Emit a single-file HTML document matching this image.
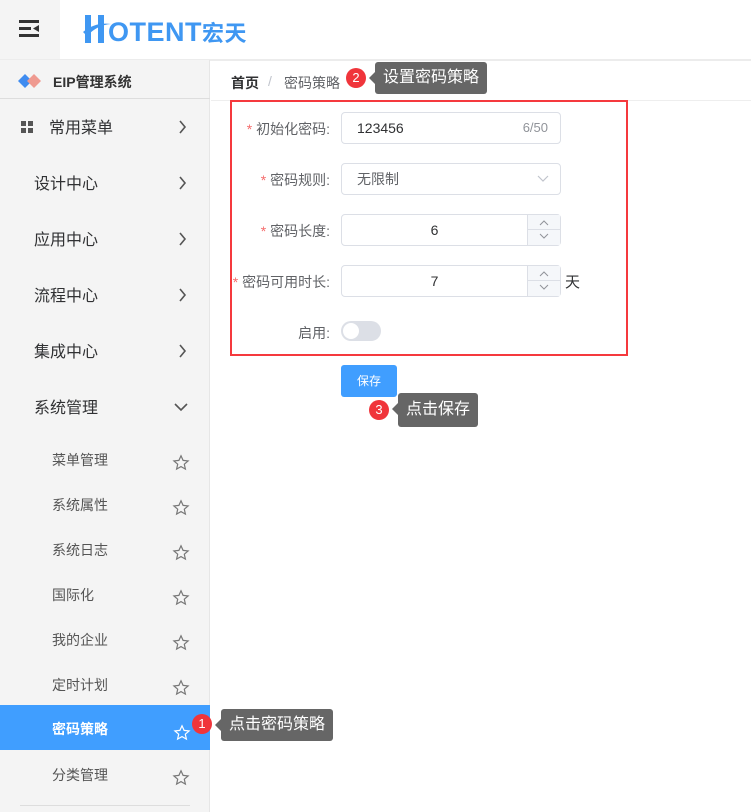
<!DOCTYPE html>
<html><head><meta charset="utf-8"><style>
*{margin:0;padding:0;box-sizing:border-box}
body{width:751px;height:812px;overflow:hidden;background:#fff;font-family:"Liberation Sans","Noto Sans CJK SC",sans-serif;position:relative;color:#303133}
.abs{position:absolute}
.side{left:0;top:60px;width:210px;height:752px;background:#f4f4f4;border-right:1px solid #e6e6e6}
.item{position:absolute;left:0;width:210px;font-size:16px;color:#303133}
.sub{position:absolute;left:0;width:210px;height:45px;line-height:45px;font-size:14px;color:#555;padding-left:52px}
.lbl{position:absolute;font-size:14px;color:#606266;text-align:right;width:100px;right:0}
.inp{position:absolute;left:341px;width:220px;height:32px;border:1px solid #dcdfe6;border-radius:4px;font-size:14px}
.tip{position:absolute;background:#666;color:#fff;font-size:16px;border-radius:3px;height:32px;line-height:32px;padding:0 8px}
.tip:before{content:"";position:absolute;left:-6px;top:10px;border:6px solid transparent;border-left:0;border-right-color:#666}
.badge{position:absolute;width:20px;height:20px;border-radius:50%;background:#f0353b;color:#fff;font-size:13px;text-align:center;line-height:20px}
.spin{position:absolute;right:0;top:0;width:33px;height:30px;background:#f5f7fa;border-left:1px solid #dcdfe6}
.spin div{height:15px;position:relative}
.spin svg{position:absolute;left:11px;top:5px}
</style></head><body>
<div class="abs" style="left:0;top:0;width:60px;height:60px;background:#f4f4f4"></div>
<svg class="abs" style="left:19px;top:20px" width="22" height="17"><rect x="0" y="0" width="20" height="3" fill="#333"/><rect x="0" y="7" width="12" height="3" fill="#333"/><rect x="0" y="14" width="20" height="3" fill="#333"/><path d="M20 5 L14 8.5 L20 12Z" fill="#333"/></svg>
<svg class="abs" style="left:83px;top:12px" width="28" height="33"><path d="M2 3h6v28h-6Z M15 3h6v28h-6Z" fill="#3f97f2"/><path d="M0 20 Q12 10 28 12 Q14 13 4 24Z" fill="#3f97f2"/></svg>
<div class="abs" style="left:108px;top:16px;font-size:27px;font-weight:bold;color:#3f97f2;letter-spacing:0.5px">OTENT<span style="font-size:22px">宏天</span></div>
<div class="abs" style="left:0;top:59px;width:751px;height:2px;background:#ececec"></div>
<div class="abs side"></div>
<svg class="abs" style="left:18px;top:73px" width="24" height="16"><path d="M0 8L7 1L14 8L7 15Z" fill="#3f8cf0"/><path d="M9 8L16 1L23 8L16 15Z" fill="#ef9a90"/></svg>
<div class="abs" style="left:53px;top:72px;font-size:14px;font-weight:bold;color:#333">EIP管理系统</div>
<div class="abs" style="left:0;top:98px;width:210px;height:1px;background:#ddd"></div>
<svg class="abs" style="left:21px;top:121px" width="12" height="12"><rect width="5" height="5" fill="#555"/><rect x="7" width="5" height="5" fill="#555"/><rect y="7" width="5" height="5" fill="#555"/><rect x="7" y="7" width="5" height="5" fill="#555"/></svg>
<div class="item" style="top:114px;left:49px">常用菜单</div>
<div class="item" style="top:170px;left:34px">设计中心</div>
<div class="item" style="top:226px;left:34px">应用中心</div>
<div class="item" style="top:282px;left:34px">流程中心</div>
<div class="item" style="top:338px;left:34px">集成中心</div>
<div class="item" style="top:394px;left:34px">系统管理</div>
<svg class="abs" style="left:0;top:0" width="210" height="812"><g fill="none" stroke="#555" stroke-width="1.6"><path d="M180 121l5 6-5 6"/><path d="M180 177l5 6-5 6"/><path d="M180 233l5 6-5 6"/><path d="M180 289l5 6-5 6"/><path d="M180 345l5 6-5 6"/><path d="M175 404l6 6 6-6"/></g></svg>
<div class="abs" style="left:0;top:705px;width:210px;height:45px;background:#409eff"></div>
<div class="sub" style="top:438px">菜单管理</div>
<div class="sub" style="top:483px">系统属性</div>
<div class="sub" style="top:528px">系统日志</div>
<div class="sub" style="top:573px">国际化</div>
<div class="sub" style="top:618px">我的企业</div>
<div class="sub" style="top:663px">定时计划</div>
<div class="sub" style="top:707px;color:#fff;font-weight:bold">密码策略</div>
<div class="sub" style="top:753px">分类管理</div>
<svg class="abs" style="left:0;top:0" width="210" height="812"><defs><path id="st" d="M8 0.8L10.1 5.4 15.1 5.9 11.3 9.2 12.4 14.1 8 11.6 3.6 14.1 4.7 9.2 0.9 5.9 5.9 5.4Z" fill="none" stroke-width="1.2"/></defs>
<g stroke="#777"><use href="#st" x="173" y="455"/><use href="#st" x="173" y="500"/><use href="#st" x="173" y="545"/><use href="#st" x="173" y="590"/><use href="#st" x="173" y="635"/><use href="#st" x="173" y="680"/><use href="#st" x="173" y="770"/></g><g stroke="#fff"><use href="#st" x="174" y="725"/></g>
<rect x="20" y="805" width="170" height="1" fill="#ddd"/></svg>
<div class="badge" style="left:192px;top:714px">1</div>
<div class="tip" style="left:221px;top:709px">点击密码策略</div>
<div class="abs" style="left:231px;top:73px;font-size:14px;font-weight:bold;color:#303133">首页</div>
<div class="abs" style="left:268px;top:73px;font-size:14px;color:#c0c4cc">/</div>
<div class="abs" style="left:284px;top:73px;font-size:14px;color:#606266">密码策略</div>
<div class="badge" style="left:346px;top:68px">2</div>
<div class="tip" style="left:375px;top:62px">设置密码策略</div>
<div class="abs" style="left:211px;top:100px;width:540px;height:1px;background:#eee"></div>
<div class="abs" style="left:230px;top:100px;width:398px;height:256px;border:2px solid #f5393d"></div>
<div class="lbl" style="top:119px;left:230px"><span style="color:#f56c6c">* </span>初始化密码:</div>
<div class="lbl" style="top:170px;left:230px"><span style="color:#f56c6c">* </span>密码规则:</div>
<div class="lbl" style="top:221px;left:230px"><span style="color:#f56c6c">* </span>密码长度:</div>
<div class="lbl" style="top:272px;width:110px;left:220px"><span style="color:#f56c6c">* </span>密码可用时长:</div>
<div class="lbl" style="top:323px;left:230px">启用:</div>
<div class="inp" style="top:112px;padding-left:15px;line-height:30px">123456<span style="position:absolute;right:12px;font-size:13px;color:#909399">6/50</span></div>
<div class="inp" style="top:163px;padding-left:15px;line-height:30px;color:#606266">无限制<svg style="position:absolute;right:11px;top:11px" width="12" height="8"><path d="M1 1l5 5 5-5" fill="none" stroke="#c0c4cc" stroke-width="1.2"/></svg></div>
<div class="inp" style="top:214px;line-height:30px;text-align:center;padding-right:33px">6<div class="spin"><div style="border-bottom:1px solid #dcdfe6"><svg width="10" height="6"><path d="M1 5l4-4 4 4" fill="none" stroke="#909399"/></svg></div><div><svg width="10" height="6" style="top:3px"><path d="M1 1l4 4 4-4" fill="none" stroke="#909399"/></svg></div></div></div>
<div class="inp" style="top:265px;line-height:30px;text-align:center;padding-right:33px">7<div class="spin"><div style="border-bottom:1px solid #dcdfe6"><svg width="10" height="6"><path d="M1 5l4-4 4 4" fill="none" stroke="#909399"/></svg></div><div><svg width="10" height="6" style="top:3px"><path d="M1 1l4 4 4-4" fill="none" stroke="#909399"/></svg></div></div></div>
<div class="abs" style="left:565px;top:271px;font-size:15px">天</div>
<div class="abs" style="left:341px;top:321px;width:40px;height:20px;border-radius:10px;background:#dcdfe6"><div style="position:absolute;left:2px;top:2px;width:16px;height:16px;border-radius:50%;background:#fff"></div></div>
<div class="abs" style="left:341px;top:365px;width:56px;height:32px;background:#409eff;border-radius:3px;color:#fff;font-size:12px;text-align:center;line-height:32px">保存</div>
<div class="badge" style="left:369px;top:400px">3</div>
<div class="tip" style="left:398px;top:393px;height:34px;line-height:34px">点击保存</div>
</body></html>
